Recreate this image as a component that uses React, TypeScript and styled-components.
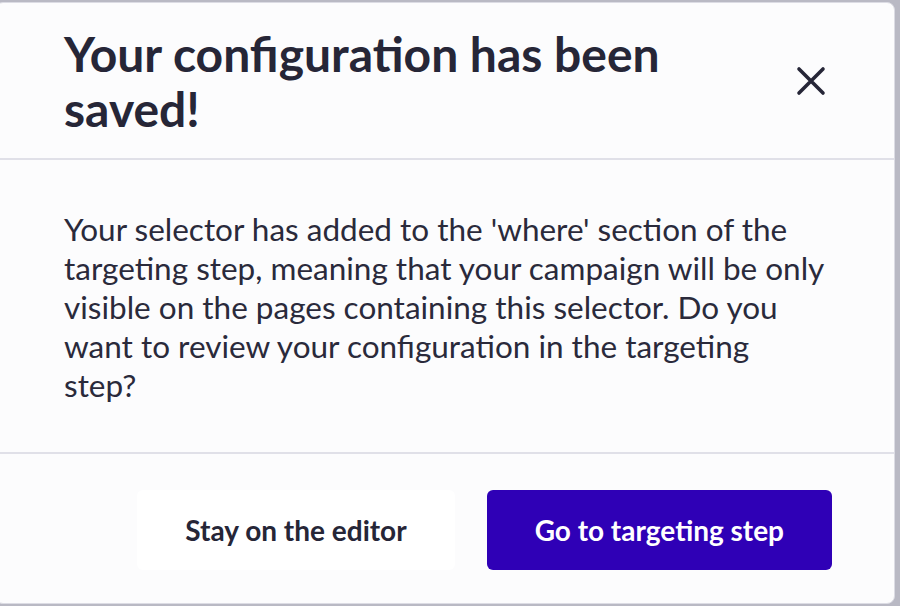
import React from "react";
import styled, { createGlobalStyle } from "styled-components";

const Global = createGlobalStyle`
  html, body { margin: 0; padding: 0; }
  body {
    background: #b9b9c4;
    font-family: Lato, "Noto Sans", sans-serif;
    width: 900px;
    height: 606px;
    overflow: hidden;
  }
`;

const Modal = styled.div`
  box-sizing: border-box;
  margin: 2px 0 0 -5px;
  width: 900px;
  height: 602px;
  background: #fcfcfd;
  border: 1px solid #dcdce4;
  border-radius: 8px;
  display: flex;
  flex-direction: column;
  overflow: hidden;
`;

const Header = styled.div`
  display: flex;
  align-items: center;
  justify-content: space-between;
  padding: 23px 63px 22px 68px;
  border-bottom: 2px solid #e0e0e8;
`;

const Title = styled.h1`
  margin: 0;
  font-size: 48px;
  line-height: 55px;
  font-weight: 700;
  color: #262637;
  max-width: 640px;
`;

const CloseButton = styled.button`
  border: none;
  background: none;
  padding: 0;
  width: 40px;
  height: 40px;
  display: flex;
  align-items: center;
  justify-content: center;
  cursor: pointer;
  color: #262637;
`;

const Body = styled.div`
  padding: 50px 60px 0 68px;
  flex: 1;
  border-bottom: 2px solid #e0e0e8;
`;

const Text = styled.p`
  margin: 0;
  font-size: 31.5px;
  line-height: 39px;
  color: #2a2a3b;
  max-width: 762px;
`;

const Footer = styled.div`
  display: flex;
  justify-content: flex-end;
  gap: 32px;
  padding: 36px 62px 33px 68px;
`;

const Button = styled.button<{ $primary?: boolean }>`
  height: 80px;
  padding: 0 48px;
  border: none;
  border-radius: 6px;
  font-family: Lato, "Noto Sans", sans-serif;
  font-size: 28px;
  font-weight: 700;
  cursor: pointer;
  background: ${(p) => (p.$primary ? "#2f00b6" : "#ffffff")};
  color: ${(p) => (p.$primary ? "#ffffff" : "#262637")};
`;

export default function App() {
  return (
    <>
      <Global />
      <Modal>
        <Header>
          <Title>Your configuration has been saved!</Title>
          <CloseButton aria-label="Close">
            <svg width="30" height="30" viewBox="0 0 30 30" fill="none">
              <path
                d="M3 3 L27 27 M27 3 L3 27"
                stroke="currentColor"
                strokeWidth="3.6"
                strokeLinecap="round"
              />
            </svg>
          </CloseButton>
        </Header>
        <Body>
          <Text>
            Your selector has added to the 'where' section of the targeting
            step, meaning that your campaign will be only visible on the pages
            containing this selector. Do you want to review your configuration
            in the targeting step?
          </Text>
        </Body>
        <Footer>
          <Button>Stay on the editor</Button>
          <Button $primary>Go to targeting step</Button>
        </Footer>
      </Modal>
    </>
  );
}
